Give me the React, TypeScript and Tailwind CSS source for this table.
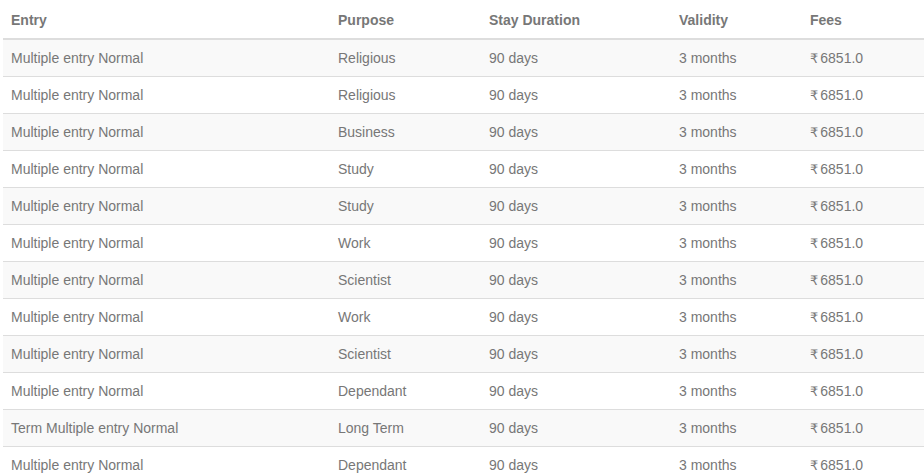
import React from "react";

const rows: [string, string][] = [
  ["Multiple entry Normal", "Religious"],
  ["Multiple entry Normal", "Religious"],
  ["Multiple entry Normal", "Business"],
  ["Multiple entry Normal", "Study"],
  ["Multiple entry Normal", "Study"],
  ["Multiple entry Normal", "Work"],
  ["Multiple entry Normal", "Scientist"],
  ["Multiple entry Normal", "Work"],
  ["Multiple entry Normal", "Scientist"],
  ["Multiple entry Normal", "Dependant"],
  ["Term Multiple entry Normal", "Long Term"],
  ["Multiple entry Normal", "Dependant"],
];

export default function App() {
  return (
    <div
      className="pt-[2px] pl-[3px] bg-white h-[473px] overflow-hidden"
      style={{ fontFamily: '"Liberation Sans", Arial, "DejaVu Sans", sans-serif' }}
    >
      <table className="w-[921px] border-collapse table-fixed text-[14px] leading-[20px] text-[#777]">
        <colgroup>
          <col className="w-[327px]" />
          <col className="w-[151px]" />
          <col className="w-[190px]" />
          <col className="w-[131px]" />
          <col />
        </colgroup>
        <thead>
          <tr className="border-b-2 border-[#ddd]">
            <th className="p-2 text-left font-bold">Entry</th>
            <th className="p-2 text-left font-bold">Purpose</th>
            <th className="p-2 text-left font-bold">Stay Duration</th>
            <th className="p-2 text-left font-bold">Validity</th>
            <th className="p-2 text-left font-bold">Fees</th>
          </tr>
        </thead>
        <tbody>
          {rows.map(([entry, purpose], i) => (
            <tr
              key={i}
              className={`border-t border-[#ddd] ${i % 2 === 0 ? "bg-[#f9f9f9]" : "bg-white"}`}
            >
              <td className="p-2">{entry}</td>
              <td className="p-2">{purpose}</td>
              <td className="p-2">90 days</td>
              <td className="p-2">3 months</td>
              <td className="p-2">
                <span
                  style={{ fontFamily: '"DejaVu Sans", sans-serif' }}
                  className="text-[13px] leading-none mr-[2px]"
                >
                  ₹
                </span>
                6851.0
              </td>
            </tr>
          ))}
        </tbody>
      </table>
    </div>
  );
}
